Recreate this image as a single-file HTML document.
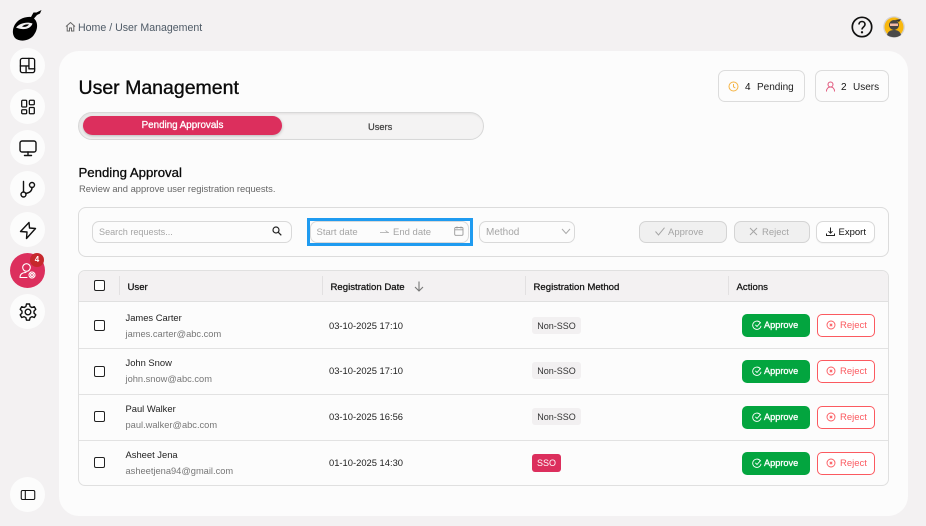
<!DOCTYPE html>
<html lang="en"><head><meta charset="utf-8"><title>User Management</title>
<style>
*{box-sizing:border-box}
html,body{margin:0;padding:0;width:926px;height:526px;overflow:hidden;background:#f3f1f2;font-family:"Liberation Sans",sans-serif;color:#111}
.a{position:absolute}
.t{position:absolute;white-space:nowrap;line-height:14px}
.c{position:absolute;left:10px;width:35px;height:35px;border-radius:50%;background:#fcfcfc;display:flex;align-items:center;justify-content:center}
.c svg{width:20px;height:20px;fill:none;stroke:#111;stroke-width:1.4;stroke-linecap:round;stroke-linejoin:round}
.box{position:absolute;border:1px solid #d9d9d9;border-radius:7px;background:#fcfcfc}
.row{position:absolute;left:79px;width:809px;border-bottom:1px solid #e2e2e2}
.cb{position:absolute;left:94px;width:11px;height:11px;border:1.5px solid #222;border-radius:2px;background:#fff}
.name{font-size:9.4px;color:#222}.mail{font-size:9.3px;color:#777}.date{font-size:9.4px;color:#222}
.tag{position:absolute;left:532px;height:17px;border-radius:3px;background:#f2f0f1;font-size:9px;line-height:18px;text-align:center;color:#333;width:49px}
.ap{position:absolute;left:742px;width:68px;height:23px;border-radius:5px;background:#03a53f;color:#fff;font-size:9.2px;-webkit-text-stroke:.3px #fff;line-height:23px;padding-left:22px}
.ap svg,.rj svg{position:absolute;width:10px;height:10px;fill:none;stroke-width:1.1}
.ap svg{stroke:#fff;left:10px;top:6px}
.rj{position:absolute;left:817px;width:58px;height:23px;border-radius:5px;border:1px solid #fb5a60;background:#fff;color:#fb5a60;font-size:9.5px;line-height:22px;padding-left:22px}
.rj svg{stroke:#fb5a60;left:8px;top:5px}
.sep{position:absolute;top:276px;width:1px;height:19px;background:#e2e0e1}
.th{font-size:9.6px;-webkit-text-stroke:.25px #111;color:#111;top:281px}
</style></head><body>

<svg class="a" style="left:12px;top:9px" width="31" height="33" viewBox="0 0 31 33"><path d="M29.500 1 L28 4.500 L25 6 L22 9.500 C26 13 26.500 20 21.500 26.500 C16.500 32.500 7 33 3 29 C0 25.500 0 19 4 14 C8 9 15 7.500 19 8 L21.500 3.500 L24.500 3.500 Z" fill="#000"/><path d="M4 18.500 C8 14 15 12.500 20.500 14.500 C19 19.500 12 22 4 18.500 Z" fill="#f3f1f2"/><path d="M10 17.500 C12 15.500 15 15 17 15.500 C15.500 17.500 12.500 18.500 10 17.500 Z" fill="#000"/></svg>

<div class="c" style="top:48px"><svg viewBox="0 0 20 20" style="width:19px;height:19px"><rect x="2.500" y="2.500" width="15" height="15" rx="2"/><path d="M2.500 10.500H11.500M8.500 10.500V17.500M11.500 2.500V13.500H17.500" stroke-width="1.400"/></svg></div>
<div class="c" style="top:89px"><svg viewBox="0 0 20 20" style="width:18px;height:18px"><rect x="3" y="2.500" width="5.500" height="7.500" rx="1"/><rect x="11.500" y="2.500" width="5.500" height="5" rx="1"/><rect x="3" y="13" width="5.500" height="4.500" rx="1"/><rect x="11.500" y="10.500" width="5.500" height="7" rx="1"/></svg></div>
<div class="c" style="top:130px"><svg viewBox="0 0 20 20"><rect x="2" y="3" width="16" height="11" rx="2"/><path d="M10 14v3.500M6.500 17.500h7"/></svg></div>
<div class="c" style="top:171px"><svg viewBox="0 0 20 20"><circle cx="5.500" cy="15.500" r="2.500"/><circle cx="14" cy="6" r="2.500"/><path d="M5.500 13V2.500M14 8.500c0 4-3 5.500-6.500 6"/></svg></div>
<div class="c" style="top:212px"><svg viewBox="0 0 20 20"><path d="M11 2.500 2.500 11.500 9 12 8.500 18.500 17.500 8.500 11.500 8z"/></svg></div>
<div class="c" style="top:253px;background:#dc2f5d"><svg viewBox="0 0 20 20" style="stroke:#fff;stroke-width:1.100"><circle cx="8.500" cy="6.500" r="3.800"/><path d="M2 16.500c0-3.500 2.500-5 6-5M2 16.500h7"/><circle cx="14" cy="14" r="1.400"/><circle cx="14" cy="14" r="3" stroke-dasharray="1.500 .8"/></svg></div>
<div class="a" style="left:30px;top:253px;width:14px;height:14px;border-radius:50%;background:#c6282c;color:#fff;font-size:8px;font-weight:bold;text-align:center;line-height:14px">4</div>
<div class="c" style="top:294px"><svg viewBox="0 0 20 20"><circle cx="10" cy="10" r="2.800"/><path d="M8.500 2h3l.6 2.500 1.800 1 2.400-.8 1.500 2.600-1.800 1.800v2l1.800 1.800-1.500 2.600-2.400-.8-1.800 1-.6 2.500h-3l-.6-2.500-1.800-1-2.400.8-1.500-2.600 1.800-1.800v-2L2.200 7.300l1.500-2.600 2.400.8 1.800-1z"/></svg></div>
<div class="c" style="top:477px"><svg viewBox="0 0 20 20" style="stroke-width:1.200;width:18px;height:18px"><rect x="2.500" y="5" width="15" height="10" rx="1.500"/><path d="M7 5v10"/></svg></div>

<svg class="a" style="left:65px;top:21px;fill:none;stroke:#666;stroke-width:1" width="11" height="11" viewBox="0 0 11 11"><path d="M1 5.500 5.500 1.500 10 5.500M2.200 4.800V10H4.500V7H6.500V10H8.800V4.800"/></svg>
<div class="t" style="left:78px;top:21px;font-size:10.600px;color:#4e5a66">Home / User Management</div>

<svg class="a" style="left:851px;top:16px;fill:none;stroke:#111" width="22" height="22" viewBox="0 0 22 22"><circle cx="11" cy="11" r="9.700" stroke-width="1.700"/><path d="M8 8.500c0-4 6-4 6 0 0 2.500-3 2.500-3 5" stroke-width="1.600"/><circle cx="11" cy="16.300" r=".7" fill="#111"/></svg>
<svg class="a" style="left:883px;top:16px" width="22" height="22" viewBox="0 0 22 22"><circle cx="11" cy="11" r="10.800" fill="#d4d2d2"/><circle cx="11" cy="11" r="9.500" fill="#f9b80e"/><path d="M4 19c1-4 4-5 7-5s6 1 7 5c-4 3-10 3-14 0z" fill="#4a4a4a"/><circle cx="11" cy="9" r="5" fill="#444"/><path d="M12 4l6-1-2 3z" fill="#333"/><rect x="7" y="7.500" width="8" height="2.500" fill="#f1b9a5"/></svg>

<div class="a" style="left:59px;top:51px;width:849px;height:465px;border-radius:20px;background:#fcfcfc"></div>

<div class="t" style="left:78.500px;top:76px;font-size:19.500px;-webkit-text-stroke:.35px #0b0b0b;line-height:24px;color:#0b0b0b">User Management</div>

<div class="box" style="left:718px;top:70px;width:87px;height:32px;border-color:#dcdcdc"></div>
<svg class="a" style="left:728px;top:81px;fill:none;stroke:#f5b342;stroke-width:1" width="11" height="11" viewBox="0 0 11 11"><circle cx="5.500" cy="5.500" r="4.500"/><path d="M5.500 3v2.800l1.800 1.200"/></svg>
<div class="t" style="left:745px;top:81px;font-size:10px">4</div>
<div class="t" style="left:757px;top:81px;font-size:10px;color:#222">Pending</div>
<div class="box" style="left:815px;top:70px;width:74px;height:32px;border-color:#dcdcdc"></div>
<svg class="a" style="left:825px;top:81px;fill:none;stroke:#e0547a;stroke-width:1" width="11" height="11" viewBox="0 0 11 11"><circle cx="5.500" cy="3.500" r="2.500"/><path d="M1.500 10.500c0-3 1.800-4.500 4-4.500s4 1.500 4 4.500"/></svg>
<div class="t" style="left:841px;top:81px;font-size:10px">2</div>
<div class="t" style="left:853px;top:81px;font-size:10px;color:#222">Users</div>

<div class="a" style="left:78px;top:112px;width:406px;height:28px;border-radius:14px;background:#f4f3f3;border:1px solid #d8d8d8;box-shadow:inset 1px 1px 2px rgba(0,0,0,.08)"></div>
<div class="a" style="left:83px;top:116px;width:199px;height:19px;border-radius:10px;background:#dc2f5d;box-shadow:0 1px 3px rgba(0,0,0,.25);color:#fff;font-size:9.800px;-webkit-text-stroke:.3px #fff;line-height:20px;text-align:center">Pending Approvals</div>
<div class="t" style="left:368px;top:119.500px;font-size:9.300px;-webkit-text-stroke:.25px #444;color:#444">Users</div>

<div class="t" style="left:78.500px;top:165px;font-size:13.200px;-webkit-text-stroke:.3px #0b0b0b;line-height:16px;color:#0b0b0b">Pending Approval</div>
<div class="t" style="left:79px;top:182px;font-size:9.400px;color:#666">Review and approve user registration requests.</div>

<div class="box" style="left:78px;top:207px;width:811px;height:50px;border-radius:8px;border-color:#dcdcdc"></div>
<div class="box" style="left:92px;top:221px;width:200px;height:22px"></div>
<div class="t" style="left:99px;top:225px;font-size:9.100px;color:#a5a5a5;line-height:15px">Search requests...</div>
<svg class="a" style="left:272px;top:226px;fill:none;stroke:#222;stroke-width:1.200" width="10" height="10" viewBox="0 0 10 10"><circle cx="4" cy="4" r="3"/><path d="M6.300 6.300 9.300 9.300"/></svg>

<div class="a" style="left:307px;top:218px;width:166px;height:28px;border:3px solid #1f9bf0"></div>
<div class="box" style="left:310px;top:221px;width:159px;height:22px"></div>
<div class="t" style="left:316.500px;top:225px;font-size:9.500px;color:#a5a5a5;line-height:15px">Start date</div>
<svg class="a" style="left:380px;top:228px;fill:none;stroke:#a5a5a5;stroke-width:.8" width="10" height="6" viewBox="0 0 10 6"><path d="M0 4.500H9M5.500 2.500 8 4.500"/></svg>
<div class="t" style="left:393px;top:225px;font-size:9.500px;color:#a5a5a5;line-height:15px">End date</div>
<svg class="a" style="left:454px;top:226px;fill:none;stroke:#999;stroke-width:.9" width="10" height="10" viewBox="0 0 10 10"><rect x=".7" y="1.500" width="8.300" height="7.800" rx="1"/><path d="M.7 3.800H9M3 .5V2.500M7 .5V2.500"/></svg>

<div class="box" style="left:479px;top:221px;width:96px;height:22px"></div>
<div class="t" style="left:486px;top:226px;font-size:10px;color:#a5a5a5">Method</div>
<svg class="a" style="left:561px;top:228px;fill:none;stroke:#aaa;stroke-width:1" width="10" height="7" viewBox="0 0 10 7"><path d="M1 1 5 5.500 9 1"/></svg>

<div class="box" style="left:639px;top:221px;width:88px;height:22px;background:#f0f0f0;border-color:#d4d4d4"></div>
<svg class="a" style="left:655px;top:227px;fill:none;stroke:#a5a5a5;stroke-width:1" width="10" height="9" viewBox="0 0 10 9"><path d="M.5 4.500 3.500 8 9.500 .7"/></svg>
<div class="t" style="left:668px;top:225px;font-size:9.500px;color:#a5a5a5;line-height:15px">Approve</div>
<div class="box" style="left:734px;top:221px;width:76px;height:22px;background:#f0f0f0;border-color:#d4d4d4"></div>
<svg class="a" style="left:749px;top:227px;fill:none;stroke:#a5a5a5;stroke-width:1" width="9" height="9" viewBox="0 0 9 9"><path d="M1 1 8 8M8 1 1 8"/></svg>
<div class="t" style="left:762px;top:225px;font-size:9.500px;color:#a5a5a5;line-height:15px">Reject</div>
<div class="box" style="left:816px;top:221px;width:59px;height:22px;background:#fff;box-shadow:0 1px 1px rgba(0,0,0,.04)"></div>
<svg class="a" style="left:826px;top:227px;fill:none;stroke:#222;stroke-width:1" width="9" height="9" viewBox="0 0 9 9"><path d="M4.500 .5V6M2.500 4.200 4.500 6.200 6.500 4.200M.5 6.500V8.500H8.500V6.500"/></svg>
<div class="t" style="left:838.500px;top:225px;font-size:9.500px;color:#111;line-height:15px">Export</div>

<div class="a" style="left:78px;top:270px;width:811px;height:216px;border:1px solid #e0e0e0;border-radius:7px;background:#fcfcfc;overflow:hidden"><div style="height:31px;background:#f3f1f2;border-bottom:1px solid #e0e0e0"></div></div>
<div class="cb" style="top:280px"></div>
<div class="sep" style="left:119px"></div><div class="sep" style="left:322px"></div><div class="sep" style="left:525px"></div><div class="sep" style="left:728px"></div>
<div class="t th" style="left:127.500px">User</div>
<div class="t th" style="left:330.500px">Registration Date</div>
<svg class="a" style="left:414px;top:281px;fill:none;stroke:#777;stroke-width:1.100" width="10" height="11" viewBox="0 0 10 11"><path d="M5 .5V10M1 6 5 10 9 6"/></svg>
<div class="t th" style="left:533.500px">Registration Method</div>
<div class="t th" style="left:736.500px">Actions</div>

<div class="row" style="top:348px;height:1px"></div>
<div class="row" style="top:394px;height:1px"></div>
<div class="row" style="top:439.500px;height:1px"></div>

<div class="cb" style="top:320px"></div>
<div class="t name" style="left:125.500px;top:311px">James Carter</div>
<div class="t mail" style="left:125.500px;top:327px">james.carter@abc.com</div>
<div class="t date" style="left:329px;top:319px">03-10-2025 17:10</div>
<div class="tag" style="top:317px">Non-SSO</div>
<div class="ap" style="top:314px"><svg viewBox="0 0 12 12"><path d="M10.300 4A5 5 0 1 0 10.800 7M4 5.800 6 7.800 10.500 2.800"/></svg>Approve</div>
<div class="rj" style="top:314px"><svg viewBox="0 0 12 12"><circle cx="6" cy="6" r="4.800"/><path d="M4.500 4.500 7.500 7.500M7.500 4.500 4.500 7.500"/></svg>Reject</div>

<div class="cb" style="top:366px"></div>
<div class="t name" style="left:125.500px;top:356px">John Snow</div>
<div class="t mail" style="left:125.500px;top:372px">john.snow@abc.com</div>
<div class="t date" style="left:329px;top:364px">03-10-2025 17:10</div>
<div class="tag" style="top:362px">Non-SSO</div>
<div class="ap" style="top:360px"><svg viewBox="0 0 12 12"><path d="M10.300 4A5 5 0 1 0 10.800 7M4 5.800 6 7.800 10.500 2.800"/></svg>Approve</div>
<div class="rj" style="top:360px"><svg viewBox="0 0 12 12"><circle cx="6" cy="6" r="4.800"/><path d="M4.500 4.500 7.500 7.500M7.500 4.500 4.500 7.500"/></svg>Reject</div>

<div class="cb" style="top:411px"></div>
<div class="t name" style="left:125.500px;top:402px">Paul Walker</div>
<div class="t mail" style="left:125.500px;top:418px">paul.walker@abc.com</div>
<div class="t date" style="left:329px;top:410px">03-10-2025 16:56</div>
<div class="tag" style="top:408px">Non-SSO</div>
<div class="ap" style="top:406px"><svg viewBox="0 0 12 12"><path d="M10.300 4A5 5 0 1 0 10.800 7M4 5.800 6 7.800 10.500 2.800"/></svg>Approve</div>
<div class="rj" style="top:406px"><svg viewBox="0 0 12 12"><circle cx="6" cy="6" r="4.800"/><path d="M4.500 4.500 7.500 7.500M7.500 4.500 4.500 7.500"/></svg>Reject</div>

<div class="cb" style="top:457px"></div>
<div class="t name" style="left:125.500px;top:448px">Asheet Jena</div>
<div class="t mail" style="left:125.500px;top:464px">asheetjena94@gmail.com</div>
<div class="t date" style="left:329px;top:456px">01-10-2025 14:30</div>
<div class="tag" style="top:454px;width:29px;height:18px;line-height:19px;background:#dc2f5d;color:#fff">SSO</div>
<div class="ap" style="top:452px"><svg viewBox="0 0 12 12"><path d="M10.300 4A5 5 0 1 0 10.800 7M4 5.800 6 7.800 10.500 2.800"/></svg>Approve</div>
<div class="rj" style="top:452px"><svg viewBox="0 0 12 12"><circle cx="6" cy="6" r="4.800"/><path d="M4.500 4.500 7.500 7.500M7.500 4.500 4.500 7.500"/></svg>Reject</div>

</body></html>
